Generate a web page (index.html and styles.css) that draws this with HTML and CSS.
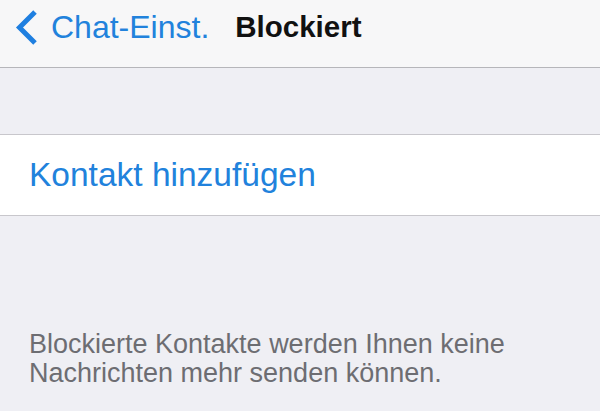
FILE: index.html
```html
<!DOCTYPE html>
<html lang="de">
<head>
<meta charset="utf-8">
<title>Blockiert</title>
<link rel="stylesheet" href="styles.css">
</head>
<body>
<header class="nav">
  <a class="back">
    <svg class="chev" width="26" height="40" viewBox="0 0 26 40"><path d="M23 5 L7.5 20.5 L23 36" fill="none" stroke="#1f7fe0" stroke-width="5" stroke-linecap="butt" stroke-linejoin="miter"/></svg>
    <span class="back-label">Chat-Einst.</span>
  </a>
  <h1 class="title">Blockiert</h1>
</header>
<main class="content">
  <section class="group">
    <div class="cell">Kontakt hinzufügen</div>
  </section>
  <p class="footer">Blockierte Kontakte werden Ihnen keine<br>Nachrichten mehr senden können.</p>
</main>
</body>
</html>
```
FILE: styles.css
```css
html, body {
  margin: 0;
  padding: 0;
  background: #efeff4;
  font-family: "Liberation Sans", Arial, sans-serif;
  width: 600px;
  height: 411px;
  overflow: hidden;
}
.nav {
  height: 60px;
  padding-top: 7px;
  background: #f7f7f8;
  border-bottom: 1px solid #b6b6ba;
  display: flex;
  align-items: flex-start;
  gap: 26px;
}
.back {
  display: flex;
  align-items: flex-start;
  color: #2182dc;
  padding-left: 12px;
}
.chev {
  display: block;
  margin-right: 13px;
}
.back-label {
  font-size: 32px;
  line-height: 40px;
}
.title {
  margin: 0;
  font-size: 29.5px;
  font-weight: bold;
  line-height: 40px;
  color: #111;
}
.content {
  padding-top: 66px;
}
.group {
  background: #fff;
  border-top: 1px solid #c8c7cc;
  border-bottom: 1px solid #c8c7cc;
}
.cell {
  height: 80px;
  line-height: 80px;
  padding-left: 29px;
  font-size: 33.5px;
  color: #2182dc;
}
.footer {
  margin: 114px 0 0;
  padding-left: 29px;
  font-size: 27px;
  line-height: 29px;
  color: #6d6d72;
}
```
